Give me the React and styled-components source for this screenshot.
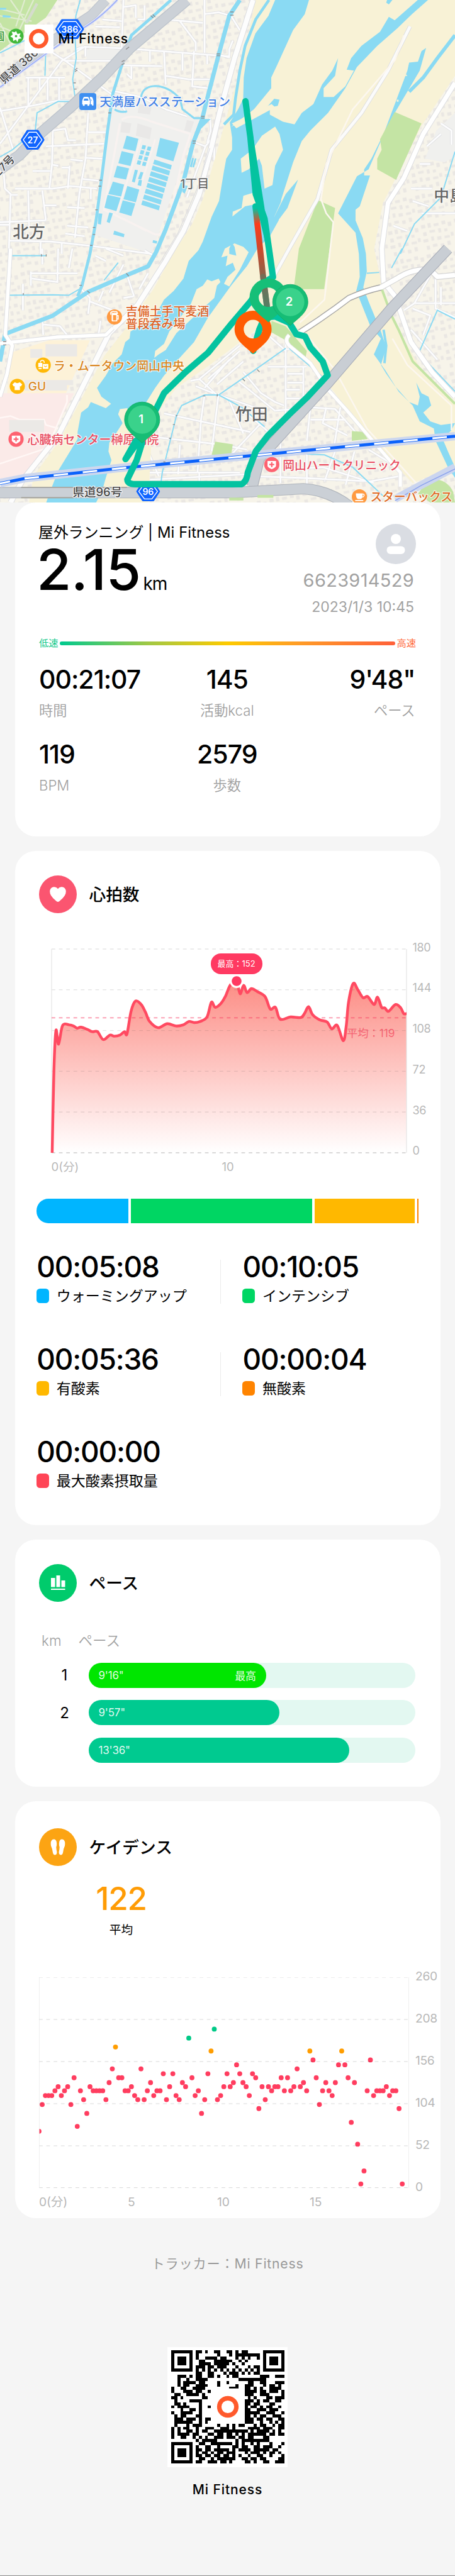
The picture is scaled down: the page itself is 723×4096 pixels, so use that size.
import React from "react";
import styled, { createGlobalStyle } from "styled-components";

const GlobalStyle = createGlobalStyle`
    * {
        box-sizing: border-box;
    }
    body {
        margin: 0;
        background: #f5f5f5;
        color: #000;
        font-family: Inter, "Noto Sans CJK JP", sans-serif;
    }
    svg {
        display: block;
    }
`;

/* ---------- map ---------- */

const WATER = "#8adaf3";
const SAND = "#f8f2d6";
const GREEN = "#c4e4a4";

const minorRoads = [
    "M0 815L350 345L480 265L720 275L1300 320",
    "M300 300L370 345L640 540L720 640",
    "M0 630L180 600L330 570L430 575",
    "M0 610L75 850",
    "M160 440L160 600M145 440H368M225 440V510M270 440V570M335 440V580",
    "M370 345L560 345L680 345",
    "M485 270V320M430 280L470 265",
    "M700 0L690 270M700 40L770 30L770 100M820 30V110H780",
    "M540 150L680 155M580 110L690 120",
    "M1160 0V300M1160 80L1240 70L1310 90L1360 170",
    "M940 110L1150 130M1020 120L1110 240V290",
    "M850 290V350M1035 300V400M1100 290L1090 490L1180 500M930 290L940 480",
    "M690 370L920 375M745 375V445L720 420M940 430L1070 450L1190 450",
    "M1175 310V365M1235 310L1300 325V280L1320 230",
    "M640 515L800 550L940 620L1060 660",
    "M300 740L295 930L280 1070M300 740L370 730L385 795H430",
    "M260 830L590 815M500 640L485 900L450 1100L425 1350M500 750H600",
    "M480 895L580 900M400 905L470 912M300 935L330 940M185 970H285",
    "M395 940L385 1070M350 950H395M470 1015L560 1025",
    "M85 1070L300 1070L400 1055L550 1070M515 1070V1130",
    "M160 1080L165 1290M240 1080L260 1250M250 1165H320M0 1260L260 1250",
    "M380 1175L480 1180M380 1280L500 1290M370 1325L480 1340",
    "M20 960L28 1070L60 1100L50 1440M60 1105H100M0 1275H55",
    "M50 1365L290 1370L520 1395L860 1440M230 1370V1440M350 1380V1440",
    "M1085 800L1165 830L1205 780M1165 830L1060 1120M1215 830V910",
    "M1190 670L1195 740L1175 810",
    "M170 1550H440M175 1540V1620M240 1410V1500M330 1410L325 1600",
    "M410 1410L390 1520M130 1610V1760M180 1580L330 1600",
    "M540 1450L600 1480M600 1410L700 1450M720 1560L760 1680",
    "M460 1640L510 1690L500 1780M510 1710L640 1760M585 1650L560 1710M700 1690L760 1680",
    "M240 1800L245 1900M245 1840L340 1850L380 1900M570 1820L560 1890",
    "M620 1660L700 1500M820 1420L870 1450M840 1550L790 1640",
    "M1080 2160L1130 2150L1230 2240M1130 2150L1360 1960M1110 2190L1210 2230",
    "M1180 2150L1360 1990M1230 2180L1380 2050M1160 2200L1300 2040",
    "M1620 1950V2360L1600 2480M1520 1900L1620 1990",
    "M1620 1980H1680M1520 2080H1740M1630 2120H1720M1630 2170H1720M1620 2210H1700M1620 2260H1700",
    "M1720 2080L1720 2250M1380 2110L1480 2230L1560 2280L1610 2300",
    "M1160 2240L1140 2380L1120 2680M1240 2230L1200 2560M1240 2240L1500 2330",
    "M1350 2160L1560 2330M1300 2270L1380 2460M930 2345L1420 2450",
    "M890 2480L1240 2520L1400 2550M840 2560L900 2700M1020 2520L1010 2690",
    "M1380 2330L1500 2430L1570 2500M1760 2310L1900 2320L2060 2500",
    "M1850 2310L1830 2400L1970 2470M1930 2310L1890 2560M1760 2380H1960",
    "M1560 2330L1760 2310L1740 2500M1480 2400L1320 2570",
    "M820 2680H1360M850 2720L1400 2690M1130 2680V2740M1590 2490V2740",
    "M1400 2700L1700 2710L2100 2730L2270 2700M1900 2560L1840 2730M2090 2550L2270 2660V2720",
    "M1640 2660L1830 2650L2120 2740M1740 2560V2800M2010 2560L1960 2750",
];

// roads of the district east of the river
const eastRoads = [
    "M2330 1870L2480 2040M2340 1750L2440 1790L2400 1900M2470 1560V1750L2580 1800",
    "M2350 1720H2580M2500 1630V1730M2290 1760L2350 1720L2440 1560",
    "M2380 930H2440M2330 1070H2450M2340 1140L2430 1170M2230 1280L2310 1310M2390 1210H2580",
    "M2500 700L2560 740V820M2420 830L2500 760",
];

const creeks = [
    "M455 0L430 90L425 200L432 330L412 450L425 550",
    "M425 575L330 575L210 640L200 740L70 850L0 890",
    "M260 260L255 430M0 300L140 230",
    "M800 550Q810 490 880 488Q960 490 1020 560L1035 620L1100 670L1160 670",
    "M50 1450H260M35 1675L300 1672L390 1675L450 1640",
    "M1620 1975L1400 2130L1240 2240L1160 2240L1030 2300L1000 2360L920 2680L905 2800",
    "M1640 1975L1820 2130L1930 2300M1240 2240L1370 2310L1500 2420",
    "M2580 2220L2400 2030L2380 1990L2480 1760L2580 1810",
    "M2580 860L2500 1120L2350 1270L2270 1440",
    "M1740 2575L1840 2580L2000 2650L2180 2820",
    "M2080 1550L2150 1545M2280 1410L2220 1520M590 1590L670 1490",
];

const canals = [
    ["M970 0L870 90L745 200L700 340L640 530L610 740L570 1060L545 1250L510 1440L465 1620L440 1680", 17],
    ["M1360 0L1300 90L1240 310L1180 540L1145 680L1095 810L1040 1030L940 1300L885 1430L840 1510L720 1560L500 1655L300 1790L40 1890", 24],
    ["M1525 0L1450 110L1390 260L1360 400L1335 560L1325 650L1270 706", 16],
    ["M30 1890L0 2050", 24],
    ["M720 632Q680 640 650 620", 12],
    ["M800 550Q810 490 880 488Q960 490 1020 560L1035 620L1100 670L1160 670", 11],
];

const ponds = [
    "718,770 785,787 768,858 697,842",
    "690,857 758,873 740,942 671,926",
    "664,940 732,955 715,1018 645,1005",
    "640,1030 704,1047 687,1115 614,1100",
    "610,1105 684,1122 660,1198 592,1178",
    "722,1055 790,1075 770,1148 700,1130",
    "696,1136 767,1154 745,1225 676,1205",
    "908,782 1015,810 983,915 885,885",
    "558,1210 580,1212 572,1273 555,1270",
    "620,1205 640,1210 622,1265 605,1258",
    "648,1308 706,1328 702,1346 642,1330",
    "868,1362 892,1368 888,1382 865,1376",
    "765,962 782,966 764,1035 748,1030",
    "797,975 813,978 800,1018 782,1015",
    "788,1020 805,1022 800,1056 780,1050",
    "1090,895 1100,898 1087,950 1076,945",
    "1105,898 1114,900 1100,950 1090,948",
    "1040,1050 1064,1054 1048,1098 1034,1090",
];
const stripes = [0, 1, 2, 3, 4, 5, 6, 7];
const basins = [0, 1, 2, 3];

const labels = [
    { text: "天満屋バスステーション", x: 565, y: 604, size: 67.5, fill: "#4180e6" },
    { text: "1丁目", x: 1022, y: 1066, size: 68, fill: "#686868" },
    { text: "北方", x: 72, y: 1350, size: 92, fill: "#646464" },
    { text: "竹田", x: 1335, y: 2382, size: 92, fill: "#646464" },
    { text: "中島", x: 2460, y: 1142, size: 88, fill: "#646464" },
    { text: "吉備土手下麦酒", x: 713, y: 1790, size: 67.5, fill: "#dd6428" },
    { text: "普段呑み場", x: 713, y: 1863, size: 67.5, fill: "#dd6428" },
    { text: "ラ・ムータウン岡山中央", x: 303, y: 2100, size: 67.5, fill: "#da8722" },
    { text: "GU", x: 160, y: 2214, size: 68, fill: "#da8722" },
    { text: "心臓病センター榊原病院", x: 155, y: 2518, size: 67.8, fill: "#e94c60" },
    { text: "岡山ハートクリニック", x: 1603, y: 2665, size: 67, fill: "#e94c60" },
    { text: "スターバックス", x: 2100, y: 2844, size: 67, fill: "#df6b26" },
    { text: "県道96号", x: 412, y: 2816, size: 66, fill: "#484848" },
    { text: "園", x: -36, y: 227, size: 62, fill: "#3a9a35" },
    { text: "県道 386", x: 22, y: 478, size: 64, fill: "#484848", rotate: -41 },
    { text: "27号", x: -8, y: 1002, size: 62, fill: "#484848", rotate: -45 },
];

function pinPath(x, y, r) {
    const tip = y + r * 1.33;
    return `M${x - r} ${y}A${r} ${r} 0 0 1 ${x + r} ${y}C${x + r} ${y + r * 0.6} ${x + r * 0.4} ${y + r * 0.95} ${x} ${tip}C${x - r * 0.4} ${y + r * 0.95} ${x - r} ${y + r * 0.6} ${x - r} ${y}Z`;
}

function ringPin(x, y, r, hole) {
    return `${pinPath(x, y, r)}M${x - hole} ${y}a${hole} ${hole} 0 1 0 ${hole * 2} 0a${hole} ${hole} 0 1 0 ${-hole * 2} 0Z`;
}

function Shield({ x, y, w, text }) {
    const hex = (a, b) =>
        `M${x - a} ${y}L${x - a + 32} ${y - b}H${x + a - 32}L${x + a} ${y}L${x + a - 32} ${y + b}H${x - a + 32}Z`;
    return (
        <g>
            <path d={hex(w / 2, 50)} fill='#0f64ff' stroke='#0f64ff' strokeWidth='12' strokeLinejoin='round' />
            <path d={hex(w / 2 - 8, 43)} fill='none' stroke='#fff' strokeWidth='5' strokeLinejoin='round' />
            <MapText x={x} y={y + 19} fontSize='50' fill='#fff' textAnchor='middle' $plain>
                {text}
            </MapText>
        </g>
    );
}

function NumberPin({ x, y, text }) {
    return (
        <g>
            <path d={pinPath(x, y, 100)} fill='#16bd75' stroke='#0faa68' strokeWidth='3' />
            <circle cx={x} cy={y} r='80' fill='#3ad28b' />
            <MapText x={x - 6} y={y + 22} fontSize='66' fill='#fff' textAnchor='middle' $plain>
                {text}
            </MapText>
        </g>
    );
}

function Hospital({ x, y }) {
    return (
        <g transform={`translate(${x} ${y})`}>
            <circle r='43' fill='#fd6270' />
            <path d='M-24 -20H24V8Q22 16 0 26Q-22 16 -24 8Z' fill='#fff' />
            <path d='M0 -14V14M-14 0H14' stroke='#fd6270' strokeWidth='8' />
        </g>
    );
}

function RouteMap() {
    return (
        <svg width='723' height='799' viewBox='0 0 2580 2850' preserveAspectRatio='none'>
            <defs>
                <pattern id='houses' width='190' height='170' patternUnits='userSpaceOnUse' patternTransform='rotate(-11)'>
                    <g fill='#eae7e3'>
                        <path d='M8 10h24v20h-24zM46 6h18v26h-18zM80 14h28v16h-28zM126 8h22v20h-22zM160 20h20v24h-20z' />
                        <path d='M12 52h20v22h-20zM50 48h32v14h-32zM100 46h16v24h-16zM134 54h18v16h-18z' />
                        <path d='M6 92h28v18h-28zM52 84h16v24h-16zM86 90h24v20h-24zM128 94h30v14h-30zM166 80h16v22h-16z' />
                        <path d='M18 132h18v22h-18zM54 128h26v16h-26zM98 134h20v20h-20zM138 126h18v24h-18z' />
                    </g>
                </pattern>
                <linearGradient id='speed' gradientUnits='userSpaceOnUse' x1='1450' y1='1180' x2='1520' y2='1740'>
                    <stop offset='0' stopColor='#04c3a0' />
                    <stop offset='0.16' stopColor='#fb3d1c' />
                    <stop offset='0.4' stopColor='#d0472b' />
                    <stop offset='0.75' stopColor='#7c6850' />
                    <stop offset='1' stopColor='#12a585' />
                </linearGradient>
            </defs>

            <rect width='2580' height='2850' fill='#f7f4ea' />
            <rect width='2580' height='2850' fill='url(#houses)' />
            <path d='M0 0H325L260 100L120 200L0 290Z' fill={GREEN} />
            <path d='M0 50L140 85M0 90L180 120M60 0L150 130M140 0L90 150M190 0L100 190M0 150L120 200M0 130L60 250' stroke='#e0ecd0' strokeWidth='8' fill='none' />
            <path d='M210 20L150 130' stroke='#d5dccd' strokeWidth='16' />
            <path d='M0 45H35V55H0ZM15 85L60 90V100L15 98Z' fill={WATER} />
            <path d='M490 280H700L650 345H490Z' fill='#efefed' />
            <path d='M60 2000L280 1930H510L370 2240H40Z' fill='#fdf2d8' />
            <path d='M0 2230H420L260 2530L130 2720H0Z' fill='#fbeae8' />
            <path d='M0 2370L60 2360L110 2380H250L260 2410L330 2430M380 2240V2280L270 2540L0 2630' stroke='#fff7f5' strokeWidth='9' fill='none' />
            <path d='M258 1952H437V2022H258ZM172 1980H240V2030H172ZM140 2155H415V2185H380V2215H140ZM52 2382H250V2450H52Z' fill='#ebe9e6' />

            {/* water works */}
            <path d='M650 515L1130 680L1080 800L860 1440L530 1330L615 740Z' fill='#f0f0ee' />
            <path d='M690 690L745 700L735 755L683 750ZM780 700L860 725L850 790L770 770ZM790 590L860 600L850 650L780 640ZM1060 680L1100 690L1080 750L1045 740Z' fill='#e9e8e7' />
            <path d='M690 680Q740 640 860 690L1080 760L1040 880L960 1250Q920 1350 870 1325L590 1190L680 700' stroke='#f8f2f0' strokeWidth='12' fill='none' />
            <path d='M800 790L660 1210M880 790L790 1080M700 1240L830 1310' stroke='#f8f2f0' strokeWidth='10' fill='none' />

            <g fill='none' strokeLinejoin='round'>
                {minorRoads.map((d) => (
                    <path key={d} d={d} stroke='#dddee1' strokeWidth='15' />
                ))}
                {minorRoads.map((d) => (
                    <path key={d} d={d} stroke='#fcfcfd' strokeWidth='10' />
                ))}
            </g>

            {/* river bed, drawn around the triangle of houses between river and highway */}
            <path
                fillRule='evenodd'
                d='M1450 0L1370 370L1330 500L1230 860L1150 1130L1090 1270L980 1440L870 1640L700 1880L590 2020L500 2190L330 2510L190 2700L165 2850H840L860 2480L900 2330L1000 2200L1190 2070L1440 1880L1570 1830L1640 1910L1760 2060L1900 2230L2080 2480L2340 2740L2580 2640V0Z'
                fill={SAND}
            />
            <path d='M2580 430L2386 720L2270 960L2172 1150L2122 1410L2170 1640L2270 1890L2380 2080L2580 2290Z' fill='#f7f4ea' />
            <path d='M2580 430L2386 720L2270 960L2172 1150L2122 1410L2170 1640L2270 1890L2380 2080L2580 2290Z' fill='url(#houses)' />
            <path d='M2475 740L2580 640V890L2520 920L2410 900Z' fill='#f0f0ee' />
            <g fill='none'>
                {eastRoads.map((d) => (
                    <path key={d} d={d} stroke='#dddee1' strokeWidth='15' />
                ))}
                {eastRoads.map((d) => (
                    <path key={d} d={d} stroke='#fcfcfd' strokeWidth='10' />
                ))}
            </g>

            <path d='M1560 0L1522 90L1448 190L1398 330L1382 440L1379 560L1350 620L1303 695L1316 780L1316 850L1283 900L1270 970L1242 1140L1200 1230L1150 1370L1125 1420L1070 1480L1040 1580L985 1650L930 1700L870 1810L740 1880L735 1920L710 1940L690 2010L640 2060L600 2130L550 2200L575 2250L630 2290L600 2315L515 2280L500 2310L460 2340L440 2450L440 2490L385 2580L330 2670L295 2760L262 2850H545L580 2780L600 2710L632 2610L615 2560L620 2510L650 2470L695 2400L670 2350L680 2320L720 2315L740 2340L830 2280L880 2200L930 2130L1000 2050L1100 1940L1180 1800L1310 1620L1400 1510L1460 1410L1530 1340L1580 1250L1595 1130L1662 920L1711 800L1760 740L1860 640L1958 500L2024 380L2139 260L2254 160L2336 80L2427 0H2369L2238 115L2205 95L2155 180L2049 260L1991 330L1966 395L2007 400L1958 490L1892 550L1835 550L1835 500L1900 430L1917 330L1884 400L1826 480L1777 590L1711 640L1670 705L1604 690L1530 650V610L1575 600L1585 565L1555 560L1520 600L1470 640L1310 720L1440 620L1538 500V440L1571 370L1612 280L1662 170L1728 80L1752 0Z' fill={WATER} />
            <g fill={SAND}>
                <path d='M1560 718L1485 770L1430 850L1365 900L1370 980L1410 960L1470 900L1485 940L1500 1070L1545 1050L1560 940L1605 850L1585 760Z' />
                <path d='M1480 1080L1380 1110L1370 1180L1320 1200L1318 1228L1390 1170L1490 1150Z' />
                <path d='M1688 1018L1600 1130L1555 1230L1580 1240L1640 1150Z' />
                <path d='M1275 1410L1255 1460L1290 1450L1280 1510L1320 1490L1335 1530L1290 1570L1270 1610L1300 1625L1360 1530L1410 1430L1380 1400L1330 1380Z' />
                <path d='M1175 1585L1150 1620L1115 1640L1080 1730L1030 1790L960 1880L930 1950L880 1990L875 2030L900 2010L940 1985L1000 1890L1160 1740L1215 1690L1230 1620L1250 1600L1240 1580L1200 1595Z' />
                <path d='M1315 700L1540 590L1560 608L1340 728Z' />
            </g>
            <path d='M1690 1018L1630 1180L1570 1260L1550 1240L1620 1100Z' fill={WATER} />
            <path d='M2416 272L2390 290L2370 350L2320 355L2310 400L2250 560L2160 800L2090 960L2024 1000L1917 1210L2016 1320L2035 1440L2040 1570L2020 1650L2100 1850L2160 1920L2120 2010L2185 2100L2260 2220L2340 2300L2380 2390L2460 2430L2470 2500L2540 2650L2580 2710V2650L2540 2560L2510 2490L2560 2440L2580 2400L2500 2410L2440 2390L2400 2340L2445 2300L2430 2250L2390 2230L2360 2170L2380 2250L2370 2300L2320 2280L2240 2190L2190 2120L2160 2070L2190 1970L2160 1880L2090 1710L2060 1630L2080 1540L2075 1440L2057 1350L2016 1250V1190L2040 1170L2098 995H2065V960L2106 900L2155 800L2221 670L2304 530L2380 400Z' fill={WATER} />
            <path d='M2580 200L2480 330L2400 440L2320 520' stroke={WATER} strokeWidth='20' fill='none' />
            <path d='M2175 1870L2190 1960L2180 2060' stroke={WATER} strokeWidth='14' fill='none' />
            <path d='M2195 0H2225L2205 25L2190 15Z' fill={WATER} />
            <path d='M2290 430l10 -12l10 14zM2275 455l8 -8l6 12zM2250 565h10v12h-10zM2130 740h10v10h-10zM2090 830l12 -14v22zM2070 880l10 -20l4 18z' fill={SAND} />
            <path d='M1300 1410L1315 1375L1330 1400L1340 1450L1300 1440Z' fill={WATER} />

            <path d='M2238 635L2390 700L2246 1020L2139 960V900L2164 850L2155 790Z' fill={GREEN} />
            <path d='M1802 1135L1900 1180L1838 1640H1665L1695 1410Z' fill={GREEN} />
            <path d='M1540 1820L1620 1850L1740 1990L1730 2040L1620 1930L1530 1880ZM1995 2445L2060 2450L2085 2490L1995 2500ZM1220 2505L1320 2520L1310 2585L1200 2580Z' fill={GREEN} />
            <path d='M2400 2760L2480 2720Q2540 2730 2570 2790L2580 2850H2440L2370 2800Z' fill={GREEN} />
            <path d='M2165 1640L2220 1790L2260 1870L2340 2050L2580 2290' stroke={GREEN} strokeWidth='14' fill='none' />

            <g fill='none'>
                {creeks.map((d) => (
                    <path key={d} d={d} stroke={WATER} strokeWidth='7' />
                ))}
                {canals.map(([d, width]) => (
                    <path key={d} d={d} stroke={WATER} strokeWidth={width} strokeLinejoin='round' />
                ))}
            </g>
            <path d='M1135 675H1195L1140 730L1115 790L1100 780Z' fill={WATER} />
            <g fill={WATER}>
                {ponds.map((p) => (
                    <polygon key={p} points={p} />
                ))}
                {stripes.map((i) => (
                    <polygon key={i} points='876,905 974,936 968,962 868,930' transform={`translate(${i * -9.6} ${i * 33})`} />
                ))}
                {basins.map((i) => (
                    <path key={i} d='M808 822l20 4l-6 22l-20 -4zM838 830l20 4l-6 22l-20 -4z' transform={`translate(${i * -9} ${i * 29})`} />
                ))}
            </g>

            {/* main roads */}
            <g fill='none' strokeLinejoin='round'>
                <path d='M1435 0L1330 330L1245 640L1200 830L1130 1100L1040 1310L940 1480L780 1730L620 1890L560 2010L330 2470L130 2720L60 2850' stroke='#dcdde0' strokeWidth='34' />
                <path d='M1435 0L1330 330L1245 640L1200 830L1130 1100L1040 1310L940 1480L780 1730L620 1890L560 2010L330 2470L130 2720L60 2850' stroke='#fdfdfd' strokeWidth='27' />
                <path d='M1190 840L1130 1040L1010 1320L900 1500' stroke='#dcdde0' strokeWidth='4' />
                <path d='M0 1948L320 1912L600 1900L640 1860M60 1410L30 1900L70 1960L40 2120L0 2250' stroke='#dcdde0' strokeWidth='25' />
                <path d='M0 1948L320 1912L600 1900L640 1860M60 1410L30 1900L70 1960L40 2120L0 2250' stroke='#fff' strokeWidth='19' />
                <path d='M2325 150L2200 400L2050 640L1880 850L1800 1130L1640 1410L1540 1590' stroke='#dcdde0' strokeWidth='23' />
                <path d='M2325 150L2200 400L2050 640L1880 850L1800 1130L1640 1410L1540 1590' stroke='#fbfbfb' strokeWidth='17' />
                <path d='M2290 200L2240 340L2000 620L1850 930L1820 1130L1850 1210L1890 1260L1840 1700L1700 1830M2225 1920L2310 2070L2560 2300V2440M1740 1900L1900 2100L2080 2430L2360 2740' stroke='#fcf7ef' strokeWidth='9' />
                <path d='M2580 470L2400 760L2290 1010L2200 1150L2165 1410L2175 1600L2240 1680L2330 1940L2450 2110L2580 2250' stroke='#dcdde0' strokeWidth='32' />
                <path d='M2580 470L2400 760L2290 1010L2200 1150L2165 1410L2175 1600L2240 1680L2330 1940L2450 2110L2580 2250' stroke='#fff' strokeWidth='25' />
                <path d='M1700 1885Q1850 1790 1980 1690Q2070 1650 2160 1630' stroke='#a9a8a6' strokeWidth='36' />
                <path d='M2160 1630L2250 1580Q2340 1520 2440 1530L2480 1570L2580 1560' stroke='#d4d4d4' strokeWidth='34' />
                <path d='M1700 1885Q1850 1790 1980 1690Q2070 1650 2160 1630L2250 1580Q2340 1520 2440 1530L2480 1570L2580 1560' stroke='#fff' strokeWidth='26' />
                <path d='M1640 1900Q1610 1930 1640 1960L1760 2060L1860 2210L1960 2320L2130 2520L2270 2680V2760' stroke='#e2e3e4' strokeWidth='24' />
                <path d='M1640 1900Q1610 1930 1640 1960L1760 2060L1860 2210L1960 2320L2130 2520L2270 2680V2760' stroke='#fff' strokeWidth='18' />
                <path d='M600 0L520 85L300 230L0 460' stroke='#bfc5cd' strokeWidth='58' />
                <path d='M600 0L520 85L300 230L0 460' stroke='#cdd2d8' strokeWidth='50' />
                <path d='M665 0Q560 110 470 160L240 320L0 495' stroke='#d3dcfb' strokeWidth='14' />
                <path d='M665 0Q560 110 470 160L240 320L0 495' stroke='#97a8f4' strokeWidth='5' />
                <path d='M1060 0L740 270L580 440L420 590L230 755L110 880L0 960' stroke='#bdc4cc' strokeWidth='64' />
                <path d='M1060 0L740 270L580 440L420 590L230 755L110 880L0 960' stroke='#ccd1d7' strokeWidth='54' />
                <path d='M2540 1410L2220 1750L1860 2170L1570 2490L1470 2600L1430 2760' stroke='#a9aeb9' strokeWidth='64' />
                <path d='M2540 1410L2220 1750L1860 2170L1570 2490L1470 2600L1430 2760' stroke='#c9ced4' strokeWidth='56' />
                <path d='M0 2794H1320L1720 2772Q1860 2780 1980 2870' stroke='#b0b5bc' strokeWidth='64' />
                <path d='M0 2794H1320L1720 2772Q1860 2780 1980 2870' stroke='#cbd0d6' strokeWidth='56' />
                <path d='M120 2764H720M120 2822H420' stroke='#a8a6a0' strokeWidth='7' />
                <path d='M1300 2830H1380M1460 2815H1550' stroke={GREEN} strokeWidth='16' />
                <path d='M2580 2650L2390 2750L2240 2830' stroke='#cbd5ef' strokeWidth='44' />
                <path d='M2580 2660L2390 2752L2240 2840' stroke='#8aa2ee' strokeWidth='5' />
                <path d='M0 2740L140 2712L720 2650L2580 2474' stroke='#cdd7ee' strokeWidth='48' />
                <path d='M0 2742L140 2714L720 2652L2580 2474' stroke='#0b62fb' strokeWidth='17' />
                <path d='M0 2742L140 2714L720 2652L2580 2474' stroke='#fff' strokeWidth='11' strokeDasharray='82 84' strokeDashoffset='24' />
            </g>
            <g stroke='#8e8e8e' strokeWidth='5'>
                <path d='M855 88l14 14M866 82l14 14M1305 68h20M1305 86h20M1228 306h20M1228 316h20M714 280l18 -14M690 350l16 -8M690 368l16 -8M425 395l14 -8M425 405l14 -8M416 470h14M420 505h14M614 640h16M1140 660h20M1140 670h20M1092 800h18M1092 812h18M562 1022h16M558 1056h16M540 1190h14M526 1290h14M526 1330h14M510 1392h14' />
                <path d='M716 1550l14 16M495 1650l14 12M450 1618h14M236 1442v12M262 1442v12M132 1662v12M18 1938h18M18 1956h18M1375 2148l14 14M1458 2096l14 14M1232 2236v12M1150 2246h14M996 2358h10M980 2408h12M958 2486h12M926 2620h12' />
            </g>

            {/* places */}
            <g>
                <circle cx='91' cy='205' r='43' fill='#43b93b' />
                <path d='M91 176l8 17l18 -4l-7 16l13 13l-18 3l-6 18l-9 -14l-15 8l-2 -18l-15 -8l14 -11l-6 -17l18 4z' fill='#fff' />
                <circle cx='91' cy='205' r='8' fill='#43b93b' stroke='#fff' strokeWidth='3' />
                <rect x='450' y='528' width='96' height='96' rx='14' fill='#3e8ff1' />
                <path d='M466 572L473 553Q475 549 481 549H495Q501 549 503 553L510 572V592H466ZM470 592H480V600H470ZM496 592H506V600H496ZM509 549H516Q523 549 525 555L530 572V598H521V592H514V572Z' fill='#fff' />
                <path d='M474 571L478 559H498L502 571ZM516 560L521 572H517Z' fill='#3e8ff1' />
                <circle cx='649' cy='1798' r='43' fill='#ff9a40' />
                <path d='M628 1785V1772Q640 1762 652 1768Q664 1764 666 1778H636V1820M638 1784H662V1820H638ZM662 1790H670V1810H662' fill='none' stroke='#fff' strokeWidth='6' />
                <circle cx='245' cy='2071' r='43' fill='#ffb908' />
                <path d='M217 2058H240V2082H217ZM219 2088H236V2094H219ZM243 2064H274V2092H243Z' fill='#fff' />
                <path d='M229 2056Q229 2044 240 2044Q251 2044 251 2058' stroke='#fff' strokeWidth='5' fill='none' />
                <path d='M250 2074Q258 2086 266 2074' stroke='#ffb908' strokeWidth='4' fill='none' />
                <circle cx='98' cy='2191' r='43' fill='#ffb908' />
                <path d='M84 2168Q98 2178 112 2168L126 2180L118 2192L113 2190V2212H83V2190L78 2192L70 2180Z' fill='#fff' />
                <circle cx='2038' cy='2818' r='43' fill='#ff9a40' />
                <path d='M2018 2798H2056Q2058 2828 2044 2830H2030Q2018 2826 2018 2798ZM2014 2836H2060V2842H2014Z' fill='#fff' />
                <path d='M2056 2802Q2068 2802 2064 2812Q2060 2820 2052 2820' stroke='#fff' strokeWidth='5' fill='none' />
                <Hospital x={91} y={2491} />
                <Hospital x={1541} y={2635} />
            </g>
            <Shield x={395} y={165} w={150} text='386' />
            <Shield x={185} y={793} w={122} text='27' />
            <Shield x={840} y={2787} w={122} text='96' />
            {labels.map((l) => (
                <MapText
                    key={l.text}
                    x={l.x}
                    y={l.y}
                    fontSize={l.size}
                    fill={l.fill}
                    transform={l.rotate ? `rotate(${l.rotate} ${l.x} ${l.y})` : undefined}
                >
                    {l.text}
                </MapText>
            ))}

            {/* run track */}
            <g fill='none' strokeLinecap='round' strokeLinejoin='round' strokeWidth='36'>
                <path d='M1448 1170L1466 1330L1492 1570L1514 1740' stroke='url(#speed)' strokeWidth='34' />
                <path d='M1392 574L1420 780L1450 1100L1500 1240L1525 1410L1548 1572L1500 1600L1420 1710L1310 1840L1180 2000L1050 2112L930 2230L885 2320L800 2480L712 2604L770 2500L806 2510L775 2610L722 2720Q724 2746 770 2746H1370Q1400 2730 1405 2680L1450 2560L1520 2470L1640 2350L1740 2255L1858 2128L1830 2050L1760 1970L1730 1908L1680 1895L1640 1830L1560 1795L1500 1800L1470 1870L1436 1990' stroke='#04c3a0' />
                <path d='M1393 580L1432 900L1458 1180L1510 1400L1500 1180L1440 800Z' fill='#04c3a0' stroke='none' />
                <path d='M1492 1570L1514 1740' stroke='#6d7259' strokeWidth='34' strokeOpacity='0.75' />
            </g>
            <path d={ringPin(1435, 1867, 105, 53)} fill='#ff5c02' fillRule='evenodd' />
            <path d={ringPin(1522, 1686, 107, 55)} fill='#16bf78' fillRule='evenodd' />
            <NumberPin x={1646} y={1713} text='2' />
            <NumberPin x={806} y={2380} text='1' />
        </svg>
    );
}

const MapText = styled.text`
    font-family: Inter, "Noto Sans CJK JP", sans-serif;
    font-weight: ${(p) => (p.$plain ? 600 : 500)};
    paint-order: stroke;
    stroke: ${(p) => (p.$plain ? "none" : "rgba(255, 255, 255, 0.75)")};
    stroke-width: 9px;
    stroke-linejoin: round;
`;

function Ring({ size }) {
    return (
        <svg width={size} height={size} viewBox='0 0 100 100'>
            <circle cx='50' cy='50' r='40' fill='none' stroke='#ff5a2c' strokeWidth='20' />
        </svg>
    );
}

/* ---------- heart rate ---------- */

// x runs 0-1224 over the plot, the second value is bpm
const heartRate = [
    [2, 0], [8, 73], [15, 108], [24, 96], [38, 112.5], [61, 113], [76, 112], [88, 110], [101, 111],
    [123, 109], [140, 107], [158, 107], [178, 100], [201, 104], [216, 103], [236, 104], [251, 107],
    [260, 105], [274, 125], [289, 134], [309, 131], [324, 124], [338, 116], [367, 110.5], [399, 114],
    [429, 112], [454, 113], [474, 116], [492, 115], [512, 116], [536, 120], [551, 133], [564, 128.5],
    [584, 132], [599, 138], [616, 148], [637, 152], [650, 140.5], [662, 148], [674, 141.5], [689, 145],
    [709, 142.5], [736, 138], [754, 127], [772, 128.5], [788, 118], [824, 120], [859, 119.5], [872, 123],
    [886, 129], [900, 122], [924, 117.5], [950, 115.5], [966, 109.5], [985, 112.5], [1006, 99], [1016, 112],
    [1024, 133], [1040, 149.5], [1056, 144], [1074, 137], [1090, 138], [1112, 131], [1124, 137.5],
    [1138, 128.5], [1149, 128], [1162, 125], [1186, 131], [1204, 128], [1214, 123], [1224, 123],
];

const HR_W = 564;
const HR_H = 324;

function curve(data) {
    const pts = data.map(([x, v]) => [(x / 1224) * HR_W, HR_H - (v / 180) * HR_H]);
    let d = `M${pts[0][0]} ${pts[0][1]}`;
    for (let i = 0; i < pts.length - 1; i++) {
        const p0 = pts[i - 1] || pts[i];
        const p1 = pts[i];
        const p2 = pts[i + 1];
        const p3 = pts[i + 2] || p2;
        d += `C${p1[0] + (p2[0] - p0[0]) / 6} ${p1[1] + (p2[1] - p0[1]) / 6} ${p2[0] - (p3[0] - p1[0]) / 6} ${p2[1] - (p3[1] - p1[1]) / 6} ${p2[0]} ${p2[1]}`;
    }
    return d;
}

function Grid({ width, height, dash }) {
    return (
        <g>
            {[0, 1, 2, 3, 4, 5].map((i) => (
                <path
                    key={i}
                    d={`M0 ${(height / 5) * i}H${width}`}
                    stroke={i === 5 ? "#000" : "#333"}
                    strokeOpacity={i === 5 ? 0.2 : 0.12}
                    strokeWidth='1.4'
                    strokeDasharray={dash}
                />
            ))}
            <path d={`M0 0V${height}M${width} 0V${height}`} stroke='#e4e4e4' strokeWidth='1.2' />
        </g>
    );
}

function HeartChart() {
    const line = curve(heartRate);
    return (
        <Plot $width={HR_W} $height={HR_H}>
            <svg width={HR_W} height={HR_H} overflow='visible'>
                <defs>
                    <linearGradient id='hr' x1='0' y1='0' x2='0' y2='1'>
                        <stop offset='0' stopColor='#fc8c84' />
                        <stop offset='1' stopColor='#ffffff' />
                    </linearGradient>
                </defs>
                <path d={`${line}V${HR_H}H0Z`} fill='url(#hr)' />
                <Grid width={HR_W} height={HR_H} dash='5.8 5.8' />
                <path d={`M0 109.3H${HR_W}`} stroke='#f8305a' strokeOpacity='0.5' strokeWidth='1.7' strokeDasharray='5.8 5.8' />
                <path d={line} fill='none' stroke='#ff4a61' strokeWidth='4.4' strokeLinejoin='round' />
                <circle cx='294' cy='51' r='11' fill='#fff' />
                <circle cx='294' cy='51' r='7.8' fill='#ff3a62' />
            </svg>
            <Peak>最高：152</Peak>
            <Average>平均：119</Average>
        </Plot>
    );
}

/* ---------- cadence ---------- */

const cadence = [
    70, 103, 114, 114, 114, 120, 125, 114, 120, 125, 103, 136, 76, 120, 109, 92, 125, 120, 120, 120, 120, 109, 130,
    147, 174, 136, 136, 120, 120, 125, 114, 109, 147, 109, 120, 130, 114, 120, 120, 141, 109, 125, 141, 114, 109,
    130, 125, 185, 136, 114, 120, 92, 109, 141, 169, 196, 109, 114, 125, 141, 125, 130, 152, 141, 130, 125, 114,
    141, 136, 98, 125, 109, 125, 120, 125, 125, 136, 120, 136, 120, 125, 147, 125, 130, 120, 169, 158, 136, 103,
    120, 130, 120, 114, 130, 152, 169, 152, 136, 81, 130, 54, 5, 21, 120, 158, 114, 120, 120, 120, 125, 114, 120,
    120, 98, 5,
];

function dotColor(v) {
    if (v >= 180) return "#00c986";
    if (v >= 165) return "#ff9d00";
    return "#ff3d5f";
}

function CadenceChart() {
    return (
        <Plot $width={588} $height={335}>
            <svg width='588' height='335'>
                {cadence.map((v, i) => (
                    <circle key={i} cx={i * 5.063} cy={335 - (v / 260) * 335} r='3.9' fill={dotColor(v)} />
                ))}
                <Grid width={588} height={335} dash='5.8 5.8' />
            </svg>
        </Plot>
    );
}

/* ---------- qr ---------- */

const qrRows = [
    "1111111011010011001101011000001111111",
    "1000001010000001000101111111101000001",
    "1011101010011110110001010100101011101",
    "1011101001100011111100101000001011101",
    "1011101001111011111010010000001011101",
    "1000001011101101110001000101101000001",
    "1111111010101010101010101010101111111",
    "0000000011001100010111010101100000000",
    "0011101011001101001011000000011100111",
    "0010010011110000000000111111111000000",
    "0010111101100001001000000110011000111",
    "0010110011110001000001001110001011010",
    "1001100111100000000111001101010011110",
    "1000111011001000000000001111011011101",
    "0110011110100000000000001110011100001",
    "1101000000110000000000000101000110111",
    "0100001111000000000000001110101100110",
    "0110100001000000000000001101100011000",
    "1011110001001000000000001011010110010",
    "0001001101000000000000001100111011100",
    "1001111001000000000000001111100111001",
    "0101100011000000000000001101011001110",
    "0111011101011000000000001110110110011",
    "0111111001010000000000001110010010101",
    "0100010111000001001010110001011001011",
    "1010110010011100111010000111101110011",
    "1010011010110011111111111010111101010",
    "1011110110001101101101010111111011011",
    "1001100101010011101110110110001100000",
    "0000000010111110000001011111111100000",
    "1111111001100111111101010010100010001",
    "1000001010011001000011011001101110010",
    "1011101011011011111010111101111101100",
    "1011101010110101101110001011101011010",
    "1011101011011011011010100100110010001",
    "1000001001100101111110011011011000011",
    "1111111011001110110100001101001100111",
];

function QrCode() {
    let d = "";
    qrRows.forEach((row, y) => {
        row.split("").forEach((cell, x) => {
            if (cell === "1") d += `M${x} ${y}h1v1h-1z`;
        });
    });
    return (
        <QrBox>
            <svg width='180' height='180' viewBox='0 0 37 37'>
                <path d={d} shapeRendering='crispEdges' />
                <rect x='13' y='12.5' width='11' height='11.3' rx='2' fill='#fff' />
                <circle cx='18.5' cy='18.5' r='2.8' fill='none' stroke='#ff5a2c' strokeWidth='1.45' />
            </svg>
        </QrBox>
    );
}

/* ---------- page ---------- */

const stats = [
    { value: "00:21:07", label: "時間" },
    { value: "145", label: "活動kcal" },
    { value: "9'48\"", label: "ペース" },
    { value: "119", label: "BPM" },
    { value: "2579", label: "歩数" },
];

const zones = [
    { time: "00:05:08", name: "ウォーミングアップ", color: "#00b5ff", width: 146.3 },
    { time: "00:10:05", name: "インテンシブ", color: "#00d663", width: 287.7 },
    { time: "00:05:36", name: "有酸素", color: "#ffb800", width: 159.5 },
    { time: "00:00:04", name: "無酸素", color: "#ff8400", width: 1.5 },
    { time: "00:00:00", name: "最大酸素摂取量", color: "#ff4556", width: 0 },
];

const splits = [
    { km: "1", pace: "9'16\"", width: 54.4, best: true },
    { km: "2", pace: "9'57\"", width: 58.5 },
    { km: "", pace: "13'36\"", width: 79.9 },
];

function App() {
    return (
        <Page>
            <GlobalStyle />
            <MapArea>
                <RouteMap />
                <Brand>
                    <BrandLogo>
                        <Ring size={31} />
                    </BrandLogo>
                    Mi Fitness
                </Brand>
            </MapArea>

            <Cards>
                <Card $height={531}>
                    <Summary>
                        <div>
                            <Activity>屋外ランニング | Mi Fitness</Activity>
                            <Distance>
                                2.15<span>km</span>
                            </Distance>
                        </div>
                        <User>
                            <svg width='64' height='64' viewBox='0 0 64 64'>
                                <circle cx='32' cy='32' r='32' fill='#dadde3' />
                                <circle cx='32' cy='24' r='8' fill='#fff' />
                                <rect x='17.5' y='35.5' width='29' height='12.5' rx='6' fill='#fff' />
                            </svg>
                            <UserId>6623914529</UserId>
                            <UserDate>2023/1/3 10:45</UserDate>
                        </User>
                    </Summary>
                    <SpeedScale>
                        <SpeedLabel $color='#18c98c'>低速</SpeedLabel>
                        <SpeedBar />
                        <SpeedLabel $color='#ff6a3d'>高速</SpeedLabel>
                    </SpeedScale>
                    <Stats>
                        {stats.map((s) => (
                            <Stat key={s.label}>
                                <strong>{s.value}</strong>
                                <span>{s.label}</span>
                            </Stat>
                        ))}
                    </Stats>
                </Card>

                <Card $height={1072}>
                    <CardHead $top={39}>
                        <Badge $color='#fb5570'>
                            <svg width='26' height='26' viewBox='0 0 26 26'>
                                <path d='M13 25Q11.500 25 9 22.500Q0 15 0.200 8.500Q0.500 2 6.500 1.200Q10.500 1 13 4.200Q15.500 1 19.500 1.200Q25.500 2 25.800 8.500Q26 15 17 22.500Q14.500 25 13 25Z' fill='#fff' />
                            </svg>
                        </Badge>
                        心拍数
                    </CardHead>
                    <ChartRow $top={57} $left={58}>
                        <HeartChart />
                        <YAxis $height={324}>
                            {[180, 144, 108, 72, 36, 0].map((n) => (
                                <span key={n}>{n}</span>
                            ))}
                        </YAxis>
                    </ChartRow>
                    <HeartAxis>
                        <span>0(分)</span>
                        <span>10</span>
                    </HeartAxis>
                    <ZoneBar>
                        {zones.map((z) => (
                            <ZonePart key={z.name} $color={z.color} $width={z.width} />
                        ))}
                    </ZoneBar>
                    <Zones>
                        {zones.map((z) => (
                            <Zone key={z.name}>
                                <ZoneTime>{z.time}</ZoneTime>
                                <ZoneName $color={z.color}>{z.name}</ZoneName>
                            </Zone>
                        ))}
                    </Zones>
                </Card>

                <Card $height={393}>
                    <CardHead $top={39}>
                        <Badge $color='#00cb6c'>
                            <svg width='23' height='23' viewBox='0 0 23 23'>
                                <path d='M0 4h6.500v14.500h-6.500zM8.500 0h6v18.500h-6zM16.500 8h6v10.500h-6zM0 21h22.500v2h-22.500z' fill='#fff' />
                            </svg>
                        </Badge>
                        ペース
                    </CardHead>
                    <PaceHead>
                        <span>km</span>
                        <span>ペース</span>
                    </PaceHead>
                    {splits.map((s) => (
                        <Split key={s.pace}>
                            <SplitKm>{s.km}</SplitKm>
                            <Track>
                                <Fill $best={s.best} style={{ width: `${s.width}%` }}>
                                    <span>{s.pace}</span>
                                    {s.best && <span>最高</span>}
                                </Fill>
                            </Track>
                        </Split>
                    ))}
                </Card>

                <Card $height={663}>
                    <CardHead $top={43}>
                        <Badge $color='#fca413'>
                            <svg width='24' height='26' viewBox='0 0 24 26'>
                                <path d='M5.500 0.500Q9.500 0.500 10 6Q10.500 10 9.300 13Q9.500 17 10.300 20Q11 25 7.500 25.500Q4.500 25.500 3.800 21Q3 15 1 11Q-0.500 1 5.500 0.500ZM18.500 0.500Q14.500 0.500 14 6Q13.500 10 14.700 13Q14.500 17 13.700 20Q13 25 16.500 25.500Q19.500 25.500 20.200 21Q21 15 23 11Q24.500 1 18.500 0.500Z' fill='#fff' />
                            </svg>
                        </Badge>
                        ケイデンス
                    </CardHead>
                    <CadenceAverage>
                        <strong>122</strong>
                        <span>平均</span>
                    </CadenceAverage>
                    <ChartRow $top={62} $left={38.5}>
                        <CadenceChart />
                        <YAxis $height={335} $size={19.2}>
                            {[260, 208, 156, 104, 52, 0].map((n) => (
                                <span key={n}>{n}</span>
                            ))}
                        </YAxis>
                    </ChartRow>
                    <CadenceAxis>
                        <span>0(分)</span>
                        <span>5</span>
                        <span>10</span>
                        <span>15</span>
                    </CadenceAxis>
                </Card>
            </Cards>

            <Footer>
                <Tracker>トラッカー：Mi Fitness</Tracker>
                <QrCode />
                <AppName>Mi Fitness</AppName>
            </Footer>
        </Page>
    );
}

const Page = styled.div`
    width: 723px;
    height: 4096px;
    display: flex;
    flex-direction: column;
    overflow: hidden;
    border-bottom: 1px solid #8c8c8c;
`;
const MapArea = styled.div`
    position: relative;
    height: 798.5px;
    overflow: hidden;
    flex: none;
`;
const Brand = styled.div`
    position: absolute;
    top: 38.5px;
    left: 38.5px;
    display: flex;
    align-items: center;
    gap: 8px;
    font-size: 21px;
    font-weight: 500;
    letter-spacing: 0.9px;
    white-space: nowrap;
`;
const BrandLogo = styled.div`
    width: 46px;
    height: 46px;
    display: flex;
    align-items: center;
    justify-content: center;
    background: #fff;
`;
const Cards = styled.main`
    display: flex;
    flex-direction: column;
    gap: 23px;
    padding: 0 23.5px;
`;
const Card = styled.section`
    height: ${(p) => p.$height}px;
    border-radius: 33px;
    background: #fff;
    overflow: hidden;
`;
const Summary = styled.div`
    display: flex;
    justify-content: space-between;
    height: 214px;
    padding: 34px 38.5px 0 37.5px;
`;
const Activity = styled.div`
    font-size: 23.8px;
    line-height: 28px;
    letter-spacing: 0.1px;
    white-space: nowrap;
`;
const Distance = styled.div`
    display: flex;
    align-items: baseline;
    margin: -5px 0 0 -3px;
    font-size: 90px;
    line-height: 100px;
    font-weight: 500;
    letter-spacing: -0.6px;
    span {
        margin-left: 4px;
        font-size: 28px;
        font-weight: 400;
        letter-spacing: -1px;
    }
`;
const User = styled.div`
    display: flex;
    flex-direction: column;
    align-items: flex-end;
    color: #a2a2a2;
    svg {
        margin-bottom: 9px;
    }
`;
const UserId = styled.div`
    margin-right: 3px;
    font-size: 29px;
    line-height: 34px;
    letter-spacing: 0.3px;
`;
const UserDate = styled.div`
    margin: 11px 3px 0 0;
    font-size: 23px;
    line-height: 28px;
`;
const SpeedScale = styled.div`
    display: flex;
    align-items: center;
    gap: 2px;
    height: 20px;
    padding: 0 38.5px;
`;
const SpeedLabel = styled.span`
    font-size: 15.3px;
    line-height: 20px;
    color: ${(p) => p.$color};
`;
const SpeedBar = styled.div`
    flex: 1;
    height: 6px;
    border-radius: 3px;
    background: linear-gradient(90deg, #00c98f, #a4c843 27%, #fdca00 50%, #ff9a27 72%, #ff6039);
`;
const Stats = styled.div`
    display: grid;
    grid-template-columns: repeat(3, 199.2px);
    grid-auto-rows: 119px;
    padding: 23px 38.5px 0;
`;
const Stat = styled.div`
    display: flex;
    flex-direction: column;
    align-items: flex-start;
    strong {
        font-size: 41px;
        line-height: 48px;
        font-weight: 500;
        letter-spacing: -1px;
    }
    span {
        margin-top: 11px;
        font-size: 22.2px;
        line-height: 30px;
        color: #a0a0a0;
        font-weight: 350;
    }
    &:nth-child(3n + 2) {
        align-items: center;
    }
    &:nth-child(3n) {
        align-items: flex-end;
    }
`;
const CardHead = styled.h2`
    display: flex;
    align-items: center;
    gap: 19.5px;
    margin: 0;
    padding: ${(p) => p.$top}px 0 0 38.5px;
    font-size: 26.7px;
    line-height: 60px;
    font-weight: 500;
`;
const Badge = styled.span`
    width: 60px;
    height: 60px;
    display: flex;
    align-items: center;
    justify-content: center;
    border-radius: 50%;
    background: ${(p) => p.$color};
`;
const ChartRow = styled.div`
    display: flex;
    gap: 10px;
    padding: ${(p) => p.$top}px 0 0 ${(p) => p.$left}px;
`;
const Plot = styled.div`
    position: relative;
    flex: none;
    width: ${(p) => p.$width}px;
    height: ${(p) => p.$height}px;
`;
const YAxis = styled.div`
    display: flex;
    flex-direction: column;
    justify-content: space-between;
    height: ${(p) => p.$height + 20}px;
    margin: -12px 0 -8px;
    font-size: ${(p) => p.$size || 18}px;
    line-height: 20px;
    color: #b8b8b8;
    letter-spacing: -0.3px;
`;
const Peak = styled.div`
    position: absolute;
    left: 253px;
    top: 7px;
    width: 82px;
    height: 33px;
    border-radius: 16px;
    background: #ff3a62;
    color: #fff;
    font-size: 13px;
    line-height: 33px;
    text-align: center;
    white-space: nowrap;
`;
const Average = styled.div`
    position: absolute;
    right: 18px;
    top: 122px;
    font-size: 17.3px;
    line-height: 24px;
    color: rgba(240, 45, 75, 0.6);
    white-space: nowrap;
`;
const HeartAxis = styled.div`
    display: grid;
    grid-template-columns: 271px 1fr;
    padding: 10px 0 0 58px;
    font-size: 18.5px;
    line-height: 24px;
    color: #b8b8b8;
`;
const ZoneBar = styled.div`
    display: flex;
    gap: 3.9px;
    width: 608px;
    height: 39px;
    margin: 39px 0 0 34.7px;
    border-radius: 19px 0 0 19px;
    overflow: hidden;
`;
const ZonePart = styled.div`
    flex: none;
    width: ${(p) => p.$width}px;
    background: ${(p) => p.$color};
`;
const Zones = styled.div`
    display: grid;
    grid-template-columns: 327.3px 1fr;
    grid-auto-rows: 147.2px;
    padding: 42px 0 0 34.7px;
`;
const Zone = styled.div`
    position: relative;
    /* short rule between the two columns */
    &:nth-child(odd):not(:last-child)::after {
        content: "";
        position: absolute;
        left: 292px;
        top: 16px;
        height: 70px;
        border-left: 1px solid #ececec;
    }
`;
const ZoneTime = styled.div`
    font-size: 46px;
    line-height: 54px;
    font-weight: 500;
    letter-spacing: -1.2px;
`;
const ZoneName = styled.div`
    display: flex;
    align-items: center;
    gap: 12px;
    margin-top: 4px;
    font-size: 23px;
    line-height: 32px;
    white-space: nowrap;
    &::before {
        content: "";
        width: 19.5px;
        height: 23px;
        border-radius: 5.5px;
        background: ${(p) => p.$color};
    }
`;
const PaceHead = styled.div`
    display: flex;
    gap: 27px;
    height: 97px;
    padding: 46px 0 0 42.5px;
    font-size: 22.5px;
    line-height: 32px;
    color: #a2a2a2;
    font-weight: 350;
`;
const Split = styled.div`
    display: flex;
    align-items: center;
    height: 40px;
    margin-bottom: 19.6px;
`;
const SplitKm = styled.div`
    width: 117px;
    padding-left: 41px;
    text-align: center;
    font-size: 24px;
`;
const Track = styled.div`
    width: 519px;
    height: 40px;
    border-radius: 20px;
    background: #e3f8f1;
`;
const Fill = styled.div`
    display: flex;
    align-items: center;
    justify-content: space-between;
    height: 40px;
    padding: 0 16px;
    border-radius: 20px;
    background: ${(p) => (p.$best ? "#00e600" : "#00ca90")};
    color: rgba(255, 255, 255, 0.9);
    font-size: 17px;
    letter-spacing: -0.2px;
`;
const CadenceAverage = styled.div`
    display: flex;
    flex-direction: column;
    align-items: center;
    width: 120px;
    margin: 22px 0 0 109px;
    strong {
        font-size: 51px;
        line-height: 60px;
        font-weight: 500;
        color: #ff9c05;
        letter-spacing: -1.2px;
    }
    span {
        margin-top: 7px;
        font-size: 18.7px;
        line-height: 26px;
    }
`;
const CadenceAxis = styled.div`
    display: grid;
    grid-template-columns: 141px 142px 147px 1fr;
    padding: 10px 0 0 38.5px;
    font-size: 19.2px;
    line-height: 24px;
    color: #b8b8b8;
`;
const Footer = styled.footer`
    display: flex;
    flex-direction: column;
    align-items: center;
    padding-top: 57px;
`;
const Tracker = styled.div`
    font-size: 21.2px;
    line-height: 30px;
    letter-spacing: 0.8px;
    color: #999;
`;
const QrBox = styled.div`
    margin-top: 118px;
    padding: 5.5px;
    background: #fff;
`;
const AppName = styled.div`
    margin-top: 22px;
    font-size: 21px;
    line-height: 28px;
    font-weight: 500;
    letter-spacing: 0.9px;
`;

export default App;
